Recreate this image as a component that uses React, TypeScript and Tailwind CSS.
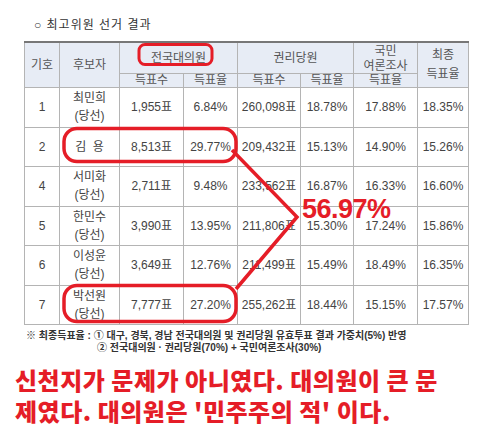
const rows = [
  { no: "1", name: "최민희", won: true, a: "1,955표", b: "6.84%", c: "260,098표", d: "18.78%", e: "17.88%", f: "18.35%" },
  { no: "2", name: "김  용", won: false, a: "8,513표", b: "29.77%", c: "209,432표", d: "15.13%", e: "14.90%", f: "15.26%" },
  { no: "4", name: "서미화", won: true, a: "2,711표", b: "9.48%", c: "233,562표", d: "16.87%", e: "16.33%", f: "16.60%" },
  { no: "5", name: "한민수", won: true, a: "3,990표", b: "13.95%", c: "211,806표", d: "15.30%", e: "17.24%", f: "15.86%" },
  { no: "6", name: "이성윤", won: true, a: "3,649표", b: "12.76%", c: "211,499표", d: "15.49%", e: "18.49%", f: "16.35%" },
  { no: "7", name: "박선원", won: true, a: "7,777표", b: "27.20%", c: "255,262표", d: "18.44%", e: "15.15%", f: "17.57%" },
];

const th = "border border-[#b4b4b4] bg-[#e7ecf5] p-0 font-normal text-[#555] align-middle text-center";
const td = "border border-[#b4b4b4] p-0 text-center align-middle text-[#444]";

export default function App() {
  return (
    <div
      className="relative w-[493px] h-[433px] overflow-hidden bg-white"
      style={{ fontFamily: '"Liberation Sans", "Noto Sans CJK KR", sans-serif' }}
    >
      <div className="pl-[34px] pt-[17px] text-[12px] leading-[16px] text-[#333] tracking-[1px]">
        ○ 최고위원 선거 결과
      </div>

      <table className="ml-[24px] mt-[8px] w-[444px] table-fixed border-collapse border-t-2 border-t-[#777] text-[12px] leading-[18px]">
        <colgroup>
          <col className="w-[35px]" />
          <col className="w-[60px]" />
          <col className="w-[64px]" />
          <col className="w-[54px]" />
          <col className="w-[63px]" />
          <col className="w-[53px]" />
          <col className="w-[64px]" />
          <col className="w-[51px]" />
        </colgroup>
        <thead>
          <tr className="h-[30px]">
            <th rowSpan={2} className={th}>기호</th>
            <th rowSpan={2} className={th}>후보자</th>
            <th colSpan={2} className={th}>전국대의원</th>
            <th colSpan={2} className={th}>권리당원</th>
            <th className={th}>
              <div className="flex h-[30px] flex-col justify-between leading-[14px] pt-[1px]">
                <span>국민</span>
                <span>여론조사</span>
              </div>
            </th>
            <th rowSpan={2} className={`${th} leading-[19px]`}>최종<br />득표율</th>
          </tr>
          <tr className="h-[14px]">
            <th className={`${th} leading-[13px]`}>득표수</th>
            <th className={`${th} leading-[13px]`}>득표율</th>
            <th className={`${th} leading-[13px]`}>득표수</th>
            <th className={`${th} leading-[13px]`}>득표율</th>
            <th className={`${th} leading-[13px]`}>득표율</th>
          </tr>
        </thead>
        <tbody>
          {rows.map((r) => (
            <tr key={r.no} className="h-[39.5px] border-b border-[#999]">
              <td className={td}>{r.no}</td>
              <td className={`${td} whitespace-pre`}>
                {r.name}
                {r.won && (
                  <>
                    <br />(당선)
                  </>
                )}
              </td>
              <td className={td}>{r.a}</td>
              <td className={td}>{r.b}</td>
              <td className={td}>{r.c}</td>
              <td className={td}>{r.d}</td>
              <td className={td}>{r.e}</td>
              <td className={td}>{r.f}</td>
            </tr>
          ))}
        </tbody>
      </table>

      <div className="mt-[5px] pl-[26px] text-[10px] leading-[12px] text-[#333] font-bold">
        <div>※ 최종득표율 : ① 대구, 경북, 경남 전국대의원 및 권리당원 유효투표 결과 가중치(5%) 반영</div>
        <div className="pl-[71px]">② 전국대의원 · 권리당원(70%) + 국민여론조사(30%)</div>
      </div>

      <div
        className="mt-[10px] pl-[15px] text-[24px] leading-[31px] font-black tracking-[0.5px] text-[#e51d27] whitespace-nowrap"
        style={{ fontFamily: '"Noto Sans CJK KR", sans-serif' }}
      >
        <div>신천지가 문제가 아니였다. 대의원이 큰 문</div>
        <div>제였다. 대의원은 '민주주의 적' 이다.</div>
      </div>

      <svg className="absolute left-0 top-0" width="493" height="433" fill="none">
        <rect x="139" y="44.5" width="73" height="20" rx="6" stroke="#e51d27" strokeWidth="3" />
        <rect x="64" y="128.5" width="172" height="33" rx="13" stroke="#e51d27" strokeWidth="3.5" />
        <rect x="64" y="285.5" width="172" height="36" rx="13" stroke="#e51d27" strokeWidth="3.5" />
        <polyline points="232,150 297,217 236,289" stroke="#e51d27" strokeWidth="3.5" strokeLinejoin="miter" />
      </svg>

      <div
        className="absolute left-[302px] top-[193px] text-[27px] leading-[32px] font-bold text-[#e51d27] tracking-[-0.5px]"
        style={{ fontFamily: '"Liberation Sans", sans-serif' }}
      >
        56.97%
      </div>
    </div>
  );
}
